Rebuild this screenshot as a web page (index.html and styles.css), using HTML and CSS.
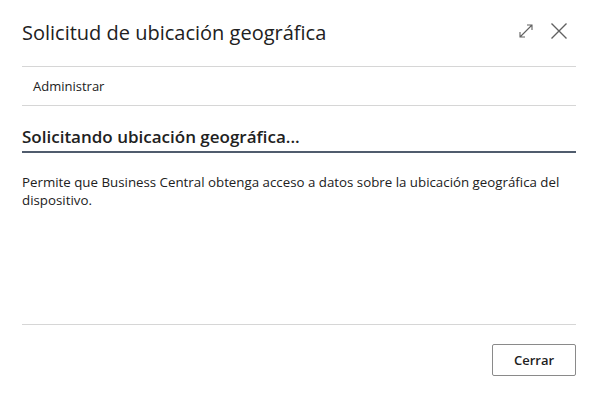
FILE: index.html
```html
<!DOCTYPE html>
<html lang="es">
<head>
    <meta charset="UTF-8">
    <title>Solicitud de ubicación geográfica</title>
    <link rel="stylesheet" href="styles.css">
</head>
<body>
    <div class="dialog">
        <div class="dialog-header">
            <h1>Solicitud de ubicación geográfica</h1>
            <div class="header-icons">
                <svg class="icon" width="16" height="16" viewBox="0 0 16 16">
                    <path d="M2 14 L14 2 M9 2 H14 V7 M2 9 V14 H7" fill="none" stroke="#616161" stroke-width="1.1"/>
                </svg>
                <svg class="icon close" width="18" height="18" viewBox="0 0 18 18">
                    <path d="M1.5 1.5 L16.5 16.5 M16.5 1.5 L1.5 16.5" fill="none" stroke="#616161" stroke-width="1.4"/>
                </svg>
            </div>
        </div>

        <div class="action-bar">
            <span>Administrar</span>
        </div>

        <div class="section">
            <h2>Solicitando ubicación geográfica...</h2>
            <p>Permite que Business Central obtenga acceso a datos sobre la ubicación geográfica del dispositivo.</p>
        </div>

        <div class="dialog-footer">
            <button class="btn">Cerrar</button>
        </div>
    </div>
</body>
</html>
```

FILE: styles.css
```css
body {
    margin: 0;
    background: #fff;
    font-family: "Open Sans", "Noto Sans", sans-serif;
    color: #212121;
}

.dialog {
    width: 554px;
    height: 396px;
    padding: 0 20px 0 22px;
    display: flex;
    flex-direction: column;
}

.dialog-header {
    height: 66px;
    display: flex;
    align-items: center;
    justify-content: space-between;
    border-bottom: 1px solid #d6d6d6;
}

.dialog-header h1 {
    margin: 0 0 2px 0;
    font-size: 20px;
    font-weight: 400;
}

.header-icons {
    display: flex;
    align-items: center;
    gap: 16px;
    margin-right: 8px;
    margin-bottom: 4px;
}

.action-bar {
    height: 38px;
    display: flex;
    align-items: center;
    padding-left: 11px;
    font-size: 13px;
    border-bottom: 1px solid #d6d6d6;
}

.section {
    flex: 1;
    border-bottom: 1px solid #d6d6d6;
}

.section h2 {
    margin: 19px 0 0 0;
    padding-bottom: 3px;
    font-size: 17px;
    font-weight: 600;
    border-bottom: 2px solid #505c6d;
}

.section p {
    margin: 20px 0 0 0;
    font-size: 13.3px;
    line-height: 18px;
}

.dialog-footer {
    height: 71px;
    display: flex;
    justify-content: flex-end;
    align-items: flex-start;
}

.btn {
    margin-top: 19px;
    width: 84px;
    height: 32px;
    background: #fff;
    border: 1px solid #8a8a8a;
    border-radius: 2px;
    font-family: "Open Sans", "Noto Sans", sans-serif;
    font-size: 13px;
    font-weight: 600;
    color: #212121;
}
```
